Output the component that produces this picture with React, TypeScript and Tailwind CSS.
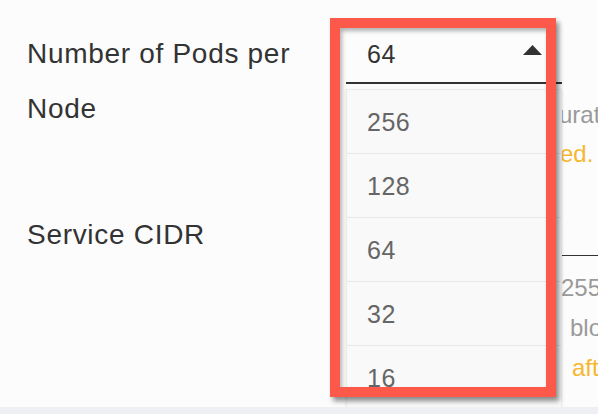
import React from "react";

const podOptions = ["256", "128", "64", "32", "16"];

export default function App() {
  return (
    <div className="relative w-full h-[414px] overflow-hidden bg-[#fcfcfc] font-['Liberation_Sans',Arial,sans-serif]">
      <div className="relative h-[407px] overflow-hidden pl-[27px] pt-[26px]">
        {/* pods per node row */}
        <div className="grid grid-cols-[319px_1fr]">
          <div className="text-[28px] leading-[55px] tracking-[0.7px] text-[#333]">
            Number of Pods per
            <br />
            Node
          </div>
          <div className="min-w-0">
            <div className="mt-[13px] flex h-[45px] w-[216px] items-start justify-between border-b-2 border-[#333] pl-[21px] pr-[20px]">
              <span className="text-[25px] leading-[30px] tracking-[0.5px] text-[#333]">64</span>
              <svg width="19" height="10" viewBox="0 0 19 10" className="mt-[6px]">
                <path d="M0 10 L9.5 0 L19 10 Z" fill="#333" />
              </svg>
            </div>
            <div className="mt-[11px] text-[24px] leading-[39px] whitespace-nowrap">
              <HelpLine
                width="w-[213px]"
                hidden="The pod count determines the config"
                shown="uration of the node CIDR block."
                color="text-[#9a9a9a]"
              />
              <HelpLine
                width="w-[214px]"
                hidden="It cannot be modified once it is configur"
                shown="ed."
                color="text-[#f6b72f]"
              />
            </div>
          </div>
        </div>

        {/* service cidr row */}
        <div className="mt-[34px] grid grid-cols-[319px_1fr]">
          <div className="text-[28px] leading-[55px] tracking-[0.7px] text-[#333]">
            Service CIDR
          </div>
          <div className="min-w-0">
            <div className="h-[49px] border-b border-[#333]" />
            <div className="mt-[12px] text-[24px] leading-[40px] whitespace-nowrap">
              <HelpLine
                width="w-[215px]"
                hidden="Valid values: 10.0.0.0/16 to 10."
                shown="255.255.0.0/24"
                color="text-[#9a9a9a]"
              />
              <HelpLine
                width="w-[212px]"
                hidden="It cannot overlap with the CIDR"
                shown="block of the VPC."
                color="text-[#9a9a9a]"
                gap="ml-[12px]"
              />
              <HelpLine
                width="w-[217px]"
                hidden="It cannot be modified"
                shown="after the cluster is created."
                color="text-[#f6b72f]"
                gap="ml-[9px]"
              />
            </div>
          </div>
        </div>

        {/* open dropdown */}
        <div className="absolute left-[346px] top-[89px] w-[216px] border border-[#ececec] bg-[#f9f9f9] shadow-[0_1px_3px_rgba(0,0,0,0.08)]">
          {podOptions.map((opt) => (
            <div
              key={opt}
              className="flex h-[64px] items-center border-b border-[#e8e8e8] pl-[20px] text-[25px] leading-[30px] tracking-[0.5px] text-[#666]"
            >
              {opt}
            </div>
          ))}
        </div>

        {/* annotation frame */}
        <div className="absolute left-[330px] top-[18px] h-[379px] w-[226px] border-[10px] border-[#fc594b] shadow-[3px_4px_5px_rgba(0,0,0,0.45),inset_2px_3px_4px_rgba(0,0,0,0.3)]" />
      </div>
      <div className="h-[7px] bg-[#eef0f3]" />
    </div>
  );
}

function HelpLine({ width, hidden, shown, color, gap = "" }: any) {
  return (
    <div className={`flex ${color}`}>
      <div className={`${width} shrink-0 flex justify-end overflow-hidden`}>
        <span>{hidden}</span>
      </div>
      <span className={gap}>{shown}</span>
    </div>
  );
}
